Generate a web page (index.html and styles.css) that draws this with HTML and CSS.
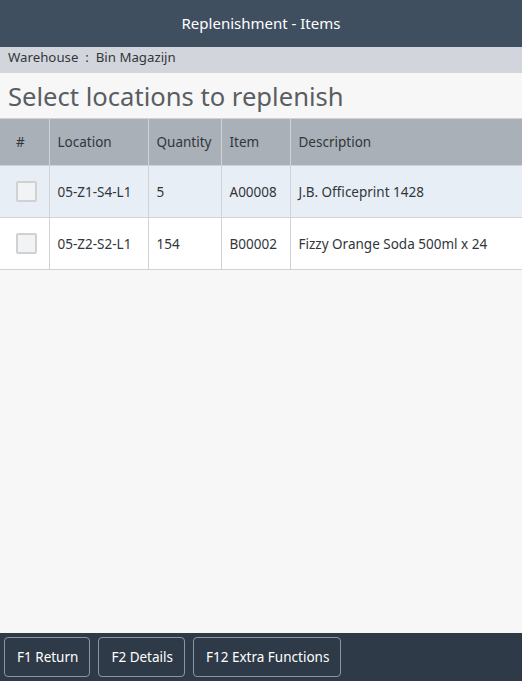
FILE: index.html
```html
<!DOCTYPE html>
<html lang="en">
<head>
    <meta charset="UTF-8">
    <title>Replenishment - Items</title>
    <link rel="stylesheet" href="styles.css">
</head>
<body>
    <div class="page">
        <div class="shell_bar">Replenishment - Items</div>
        <div class="context_bar">Warehouse&nbsp; : &nbsp;Bin Magazijn</div>
        <h1 class="title">Select locations to replenish</h1>

        <table class="items">
            <thead>
                <tr>
                    <th class="col_check">#</th>
                    <th class="col_location">Location</th>
                    <th class="col_qty">Quantity</th>
                    <th class="col_item">Item</th>
                    <th>Description</th>
                </tr>
            </thead>
            <tbody>
                <tr class="selected">
                    <td class="col_check"><span class="checkbox"></span></td>
                    <td>05-Z1-S4-L1</td>
                    <td>5</td>
                    <td>A00008</td>
                    <td>J.B. Officeprint 1428</td>
                </tr>
                <tr>
                    <td class="col_check"><span class="checkbox"></span></td>
                    <td>05-Z2-S2-L1</td>
                    <td>154</td>
                    <td>B00002</td>
                    <td>Fizzy Orange Soda 500ml x 24</td>
                </tr>
            </tbody>
        </table>

        <div class="spacer"></div>

        <div class="footer">
            <button>F1 Return</button>
            <button>F2 Details</button>
            <button>F12 Extra Functions</button>
        </div>
    </div>
</body>
</html>
```

FILE: styles.css
```css
html, body {
    margin: 0;
    padding: 0;
    height: 100%;
}

body {
    font-family: 'Noto Sans', 'Open Sans', sans-serif;
    background-color: #f7f7f7;
    color: #32363a;
    font-size: 13.5px;
}

.page {
    display: flex;
    flex-direction: column;
    height: 100%;
}

.shell_bar {
    height: 47px;
    line-height: 47px;
    background-color: #3f4f5f;
    color: #ffffff;
    text-align: center;
    font-size: 15px;
}

.context_bar {
    height: 26px;
    line-height: 20px;
    padding: 0 8px;
    background-color: #d2d6dc;
    color: #32363a;
    font-size: 13.25px;
}

.title {
    margin: 0;
    height: 45px;
    line-height: 48px;
    padding: 0 8px;
    font-size: 25.6px;
    font-weight: normal;
    color: #5a5e63;
}

.items {
    width: 100%;
    table-layout: fixed;
    border-collapse: collapse;
    background-color: #ffffff;
}

.items th, .items td {
    box-sizing: border-box;
    border: 1px solid #d0d3d6;
    text-align: left;
    padding: 0 8px;
    font-weight: normal;
    white-space: nowrap;
}

.items th:first-child, .items td:first-child {
    border-left: none;
}

.items th:last-child, .items td:last-child {
    border-right: none;
}

.items th {
    height: 47px;
    background-color: #a9b0b8;
    color: #32363a;
}

.items td {
    height: 52px;
}

.items tr.selected td {
    background-color: #e8eef6;
}

/* checkbox column: glyph and box sit 16px in */
.items .col_check {
    width: 49px;
    padding: 0 16px;
}

.col_location {
    width: 99px;
}

.col_qty {
    width: 73px;
}

.col_item {
    width: 69px;
}

.checkbox {
    display: block;
    width: 17px;
    height: 17px;
    border: 2px solid #cfd1d3;
    border-radius: 2px;
    background-color: #f2f3f5;
}

.spacer {
    flex: 1;
}

.footer {
    height: 48px;
    background-color: #2e3a47;
    display: flex;
    align-items: center;
    gap: 8px;
    padding: 0 4px;
}

.footer button {
    height: 40px;
    padding: 0 11px 0 12px;
    background: transparent;
    border: 1px solid #8a96a3;
    border-radius: 4px;
    color: #ffffff;
    font-family: inherit;
    font-size: 13.5px;
    cursor: pointer;
}
```
